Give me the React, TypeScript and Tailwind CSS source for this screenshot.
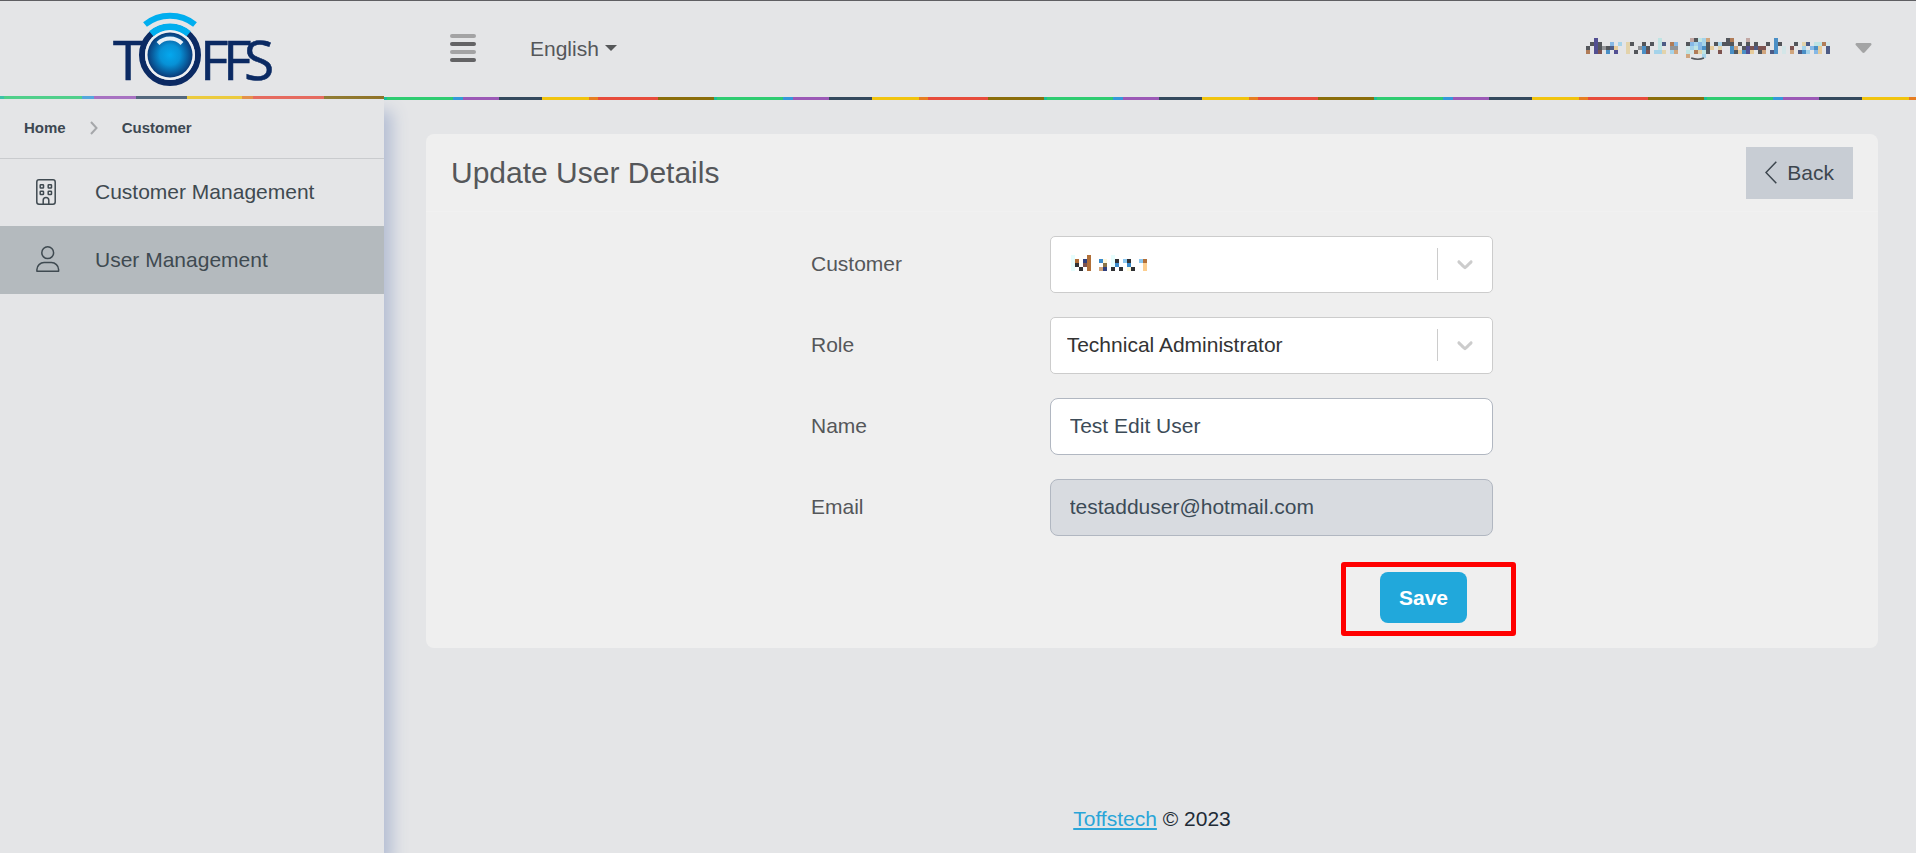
import React from "react";

const MOSAIC_COLORS: Record<string, string> = {
  d: "#53565b",
  i: "#524f92",
  b: "#4a8fc6",
  n: "#4d5b85",
  l: "#a5d3ea",
  s: "#86b8e6",
  c: "#bfe4e4",
  e: "#d3e6e8",
  g: "#929497",
  w: "#7d5350",
  t: "#d0a57d",
  r: "#b07c58",
  p: "#e6cb9a",
  y: "#e3d3ab",
  k: "#c2a8a4",
  K: "#303134",
  O: "#b16f38",
  B: "#3a8bcc",
  N: "#2f3f7c",
  C: "#e6fdfd",
  L: "#8cc8f0",
  P: "#fdce8f",
  Y: "#fdf8dc",
  V: "#8a7347",
};

const ACCOUNT_CELLS = [
  "..i...............c.......kdclt....dr...k......b.............",
  ".did..s.l.yd..d.d.cn.rs..dslsld.dlddd.d.d.d..d.bd...d.yn.ccre",
  "d.idgdnp..y..gbd..c..gg..elcsbdp.y..bt.diwnww..b.e.w..l.sbp.n",
  "r.iw.b.i..y.d.bw.lly.lt..cerycd..w..bdpbip.dt.nb.e.t.nbl.sp.n",
  ".........................t...l...............................",
];

const CUSTOMER_CELLS = [
  "C...O.....C........",
  "CO.NO..BY.CK.LK..LO",
  "CK.wO...V.CB..B...P",
  "C.K.O..tN.K.K.YK..P",
];

function Mosaic({ rows, className, children }: {
  rows: string[];
  className: string;
  children?: React.ReactNode;
}) {
  return (
    <svg
      viewBox={`0 0 ${rows[0].length} ${rows.length}`}
      aria-hidden="true"
      className={className}
    >
      <g shapeRendering="crispEdges">
        {rows.flatMap((row, y) =>
          row
            .split("")
            .map((cell, x) =>
              MOSAIC_COLORS[cell] ? (
                <rect key={`${x}-${y}`} x={x} y={y} width="1" height="1" fill={MOSAIC_COLORS[cell]} />
              ) : null
            )
        )}
      </g>
      {children}
    </svg>
  );
}

function Logo() {
  return (
    <svg viewBox="0 0 190 88" className="h-[88px] w-[190px]" role="img" aria-label="TOFFS">
      <defs>
        <radialGradient id="sphere">
          <stop offset="0" stopColor="#04a8ee" />
          <stop offset="0.45" stopColor="#0791d6" />
          <stop offset="1" stopColor="#0a3a78" />
        </radialGradient>
      </defs>
      <g
        fill="#0b2a63"
        stroke="#0b2a63"
        strokeWidth="0.6"
        fontFamily="'Liberation Sans Narrow', 'Open Sans', sans-serif"
        fontSize="55"
      >
        <text x="15" y="72">T</text>
        <text x="102" y="72">F</text>
        <text x="125" y="72">F</text>
        <text x="146" y="72">S</text>
      </g>
      <circle cx="72" cy="47" r="28" fill="none" stroke="#0b2a63" strokeWidth="6" />
      <path d="M53.500 26 A28 28 0 0 1 90.500 26" fill="none" stroke="#00aeef" strokeWidth="7" />
      <path d="M47 16.500 A40 40 0 0 1 97 16.500" fill="none" stroke="#00aeef" strokeWidth="6" />
      <circle cx="72" cy="47" r="25" fill="#eef0f3" />
      <circle cx="72" cy="47" r="22.500" fill="url(#sphere)" />
      <path d="M60 35.500 A17 17 0 0 1 84 35.500" fill="none" stroke="#e6f0f8" strokeWidth="4" />
    </svg>
  );
}

function BuildingIcon() {
  return (
    <svg viewBox="0 0 20 26" className="h-[26px] w-5" fill="none" stroke="currentColor" strokeWidth="1.500" aria-hidden="true">
      <rect x="0.8" y="0.8" width="18.400" height="24.400" rx="2.200" />
      <rect x="4.200" y="5.700" width="3.300" height="3.300" rx="0.6" />
      <rect x="12.200" y="5.700" width="3.300" height="3.300" rx="0.6" />
      <rect x="4.200" y="12.200" width="3.300" height="3.300" rx="0.6" />
      <rect x="12.200" y="12.200" width="3.300" height="3.300" rx="0.6" />
      <path d="M7.200 25v-3.800a2.800 2.800 0 0 1 5.600 0V25" />
    </svg>
  );
}

function PersonIcon() {
  return (
    <svg viewBox="0 0 24 26" className="h-[26px] w-6" fill="none" stroke="currentColor" strokeWidth="1.500" aria-hidden="true">
      <circle cx="11.700" cy="6.700" r="5.900" />
      <path d="M0.900 25.200v-1.700c0-3.800 3.400-6.900 7.200-6.900h7.300c3.800 0 7.200 3.100 7.200 6.900v1.700z" strokeLinejoin="round" />
    </svg>
  );
}

function SelectField({ id, label, options, children }: {
  id: string;
  label: string;
  options: string[];
  children?: React.ReactNode;
}) {
  return (
    <>
      <label htmlFor={id} className="pb-0.5">{label}</label>
      <div className="relative">
        <select
          id={id}
          className="block h-[57px] w-full appearance-none rounded-[5px] border border-[#cccccc] bg-white pr-16 pb-0.5 pl-4 text-[#333333]"
        >
          {options.map((option) => (
            <option key={option}>{option}</option>
          ))}
        </select>
        {children}
        <div className="pointer-events-none absolute inset-y-0 right-0 flex w-14 items-center justify-center pb-0.5">
          <span className="absolute left-0 h-8 w-px bg-[#cccccc]" />
          <svg viewBox="0 0 20 20" className="h-[26px] w-[26px]" fill="#cccccc" aria-hidden="true">
            <path d="M4.516 7.548c0.436-0.446 1.043-0.481 1.576 0l3.908 3.747 3.908-3.747c0.533-0.481 1.141-0.446 1.574 0 0.436 0.445 0.408 1.197 0 1.615-0.406 0.418-4.695 4.502-4.695 4.502-0.217 0.223-0.502 0.335-0.787 0.335s-0.570-0.112-0.789-0.335c0 0-4.287-4.084-4.695-4.502s-0.436-1.170 0-1.615z" />
          </svg>
        </div>
      </div>
    </>
  );
}

export default function App() {
  return (
    <div className="flex min-h-screen border-t border-[#5f5f63] bg-[#e4e5e7] font-['Liberation_Sans',Arial,sans-serif] text-[21px] leading-[31px] text-[#55575a]">
      <aside className="z-10 flex w-96 shrink-0 flex-col">
        <div className="flex h-[95px] pt-[7px] pl-[98px]">
          <a href="#home" className="block">
            <Logo />
          </a>
        </div>
        <div className="h-[3px] bg-[linear-gradient(90deg,#3cc2a9_0_4px,#4dd088_4px_82px,#51a6de_82px_94px,#a76fc1_94px_136px,#50647a_136px_187px,#eecb38_187px_242px,#e68f45_242px_253px,#e8685b_253px_324px,#8f7b30_324px,#8f7020)]" />
        <div className="flex-1 bg-[#e4e5e7] text-[#3d4852] shadow-[8px_12px_15px_#b4bed4]">
          <nav aria-label="Breadcrumb" className="flex h-[60px] items-center border-b border-[#c9cbce] px-6 pb-0.5 text-[15px] leading-[22px] font-bold">
            <a href="#home">Home</a>
            <svg viewBox="0 0 8 14" className="mx-6 h-3.5 w-2" fill="none" stroke="#a5a7aa" strokeWidth="2" aria-hidden="true">
              <path d="M1 1l5.500 6L1 13" />
            </svg>
            <a href="#customer">Customer</a>
          </nav>
          <nav aria-label="Main">
            <a href="#customers" className="flex h-[67px] items-center pb-0.5 pl-9 text-[#3f4a51]">
              <span className="w-[59px]">
                <BuildingIcon />
              </span>
              Customer Management
            </a>
            <a href="#users" className="flex h-[68px] items-center bg-[#b4babe] pb-0.5 pl-9 text-[#3f4a51]">
              <span className="w-[59px]">
                <PersonIcon />
              </span>
              User Management
            </a>
          </nav>
        </div>
      </aside>

      <div className="flex min-w-0 flex-1 flex-col">
        <header className="z-20 bg-[#e4e5e7]">
          <div className="flex h-24 items-center pr-11 pb-0.5 pl-[66px]">
            <button type="button" aria-label="Toggle menu" className="flex flex-col gap-1">
              <span className="h-1 w-[26px] rounded-full bg-[#a3a3a4]" />
              <span className="h-1 w-[26px] rounded-full bg-[#636365]" />
              <span className="h-1 w-[26px] rounded-full bg-[#a3a3a4]" />
              <span className="h-1 w-[26px] rounded-full bg-[#636365]" />
            </button>
            <button type="button" className="ml-[54px] flex items-center gap-1.5">
              English
              <svg viewBox="0 0 12 6" className="h-1.5 w-3" fill="#555759" aria-hidden="true">
                <path d="M0 0h12L6 6z" />
              </svg>
            </button>
            <button type="button" aria-label="Account" className="ml-auto flex items-center gap-[25px]">
              <Mosaic rows={ACCOUNT_CELLS} className="h-5 w-[244px] overflow-visible">
                <path d="M26.300 5q1.700 .6 3.200 0" fill="none" stroke="#53565b" strokeWidth="0.4" />
              </Mosaic>
              <svg viewBox="0 0 17 10" className="h-2.5 w-[17px]" fill="#a3a4a5" aria-hidden="true">
                <path d="M1.500 0h14q1.500 .8 .8 2L9.800 9.300q-1.300 1.200-2.600 0L.7 2Q0 .8 1.500 0z" />
              </svg>
            </button>
          </div>
          <div className="h-[3px] bg-[repeating-linear-gradient(90deg,#1abc9c_0_3px,#2ecc71_3px_69px,#3498db_69px_79px,#9b59b6_79px_115px,#34495e_115px_158px,#f1c40f_158px_205px,#e67e22_205px_214px,#e74c3c_214px_274px,#8a6d0b_274px_330px)]" />
        </header>

        <main className="mt-[34px] mr-[38px] ml-[42px] rounded-lg bg-[#efefef] pb-[25px]">
          <div className="flex h-[78px] items-center justify-between border-b border-[#f1f1f1] px-[25px]">
            <h1 className="text-[30px] leading-9">Update User Details</h1>
            <button type="button" className="flex h-[52px] items-center gap-2.5 bg-[#c8cdd4] px-[19px] text-[#3d464e]">
              <svg viewBox="0 0 12 23" className="h-[23px] w-3" fill="none" stroke="currentColor" strokeWidth="1.500" aria-hidden="true">
                <path d="M11.300 .7L1 11.500l10.300 10.800" />
              </svg>
              Back
            </button>
          </div>
          <form className="mx-auto mt-6 max-w-[682px]" onSubmit={(event) => event.preventDefault()}>
            <div className="grid grid-cols-[35fr_65fr] items-center gap-y-6">
              <SelectField id="customer" label="Customer" options={[""]}>
                <Mosaic rows={CUSTOMER_CELLS} className="pointer-events-none absolute top-[19px] left-[21px] h-4 w-[76px]" />
              </SelectField>
              <SelectField id="role" label="Role" options={["Technical Administrator"]} />
              <label htmlFor="name" className="pb-0.5">Name</label>
              <input id="name" type="text" defaultValue="Test Edit User" className="h-[57px] w-full rounded-lg border border-[#b1b7c1] bg-white px-[19px] pb-0.5 text-[#3c4b57]" />
              <label htmlFor="email" className="pb-0.5">Email</label>
              <input id="email" type="email" disabled defaultValue="testadduser@hotmail.com" className="h-[57px] w-full rounded-lg border border-[#b1b7c1] bg-[#d8dbe0] px-[19px] pb-0.5 text-[#3c4b57]" />
            </div>
            <div className="mt-9 flex justify-end pr-[26px]">
              <div className="relative">
                <button type="submit" className="block h-[51px] w-[87px] rounded-lg bg-[#21a8db] font-bold text-white">
                  Save
                </button>
                <span className="pointer-events-none absolute -top-2.5 -right-[49px] -bottom-[13px] -left-[39px] rounded-[3px] border-[5px] border-[#ff0000]" />
              </div>
            </div>
          </form>
        </main>

        <footer className="mt-auto mr-[38px] ml-[42px] pb-[19px] text-center text-[#212b36]">
          <a href="#toffstech" className="text-[#2aa5d8] underline">Toffstech</a> © 2023
        </footer>
      </div>
    </div>
  );
}
